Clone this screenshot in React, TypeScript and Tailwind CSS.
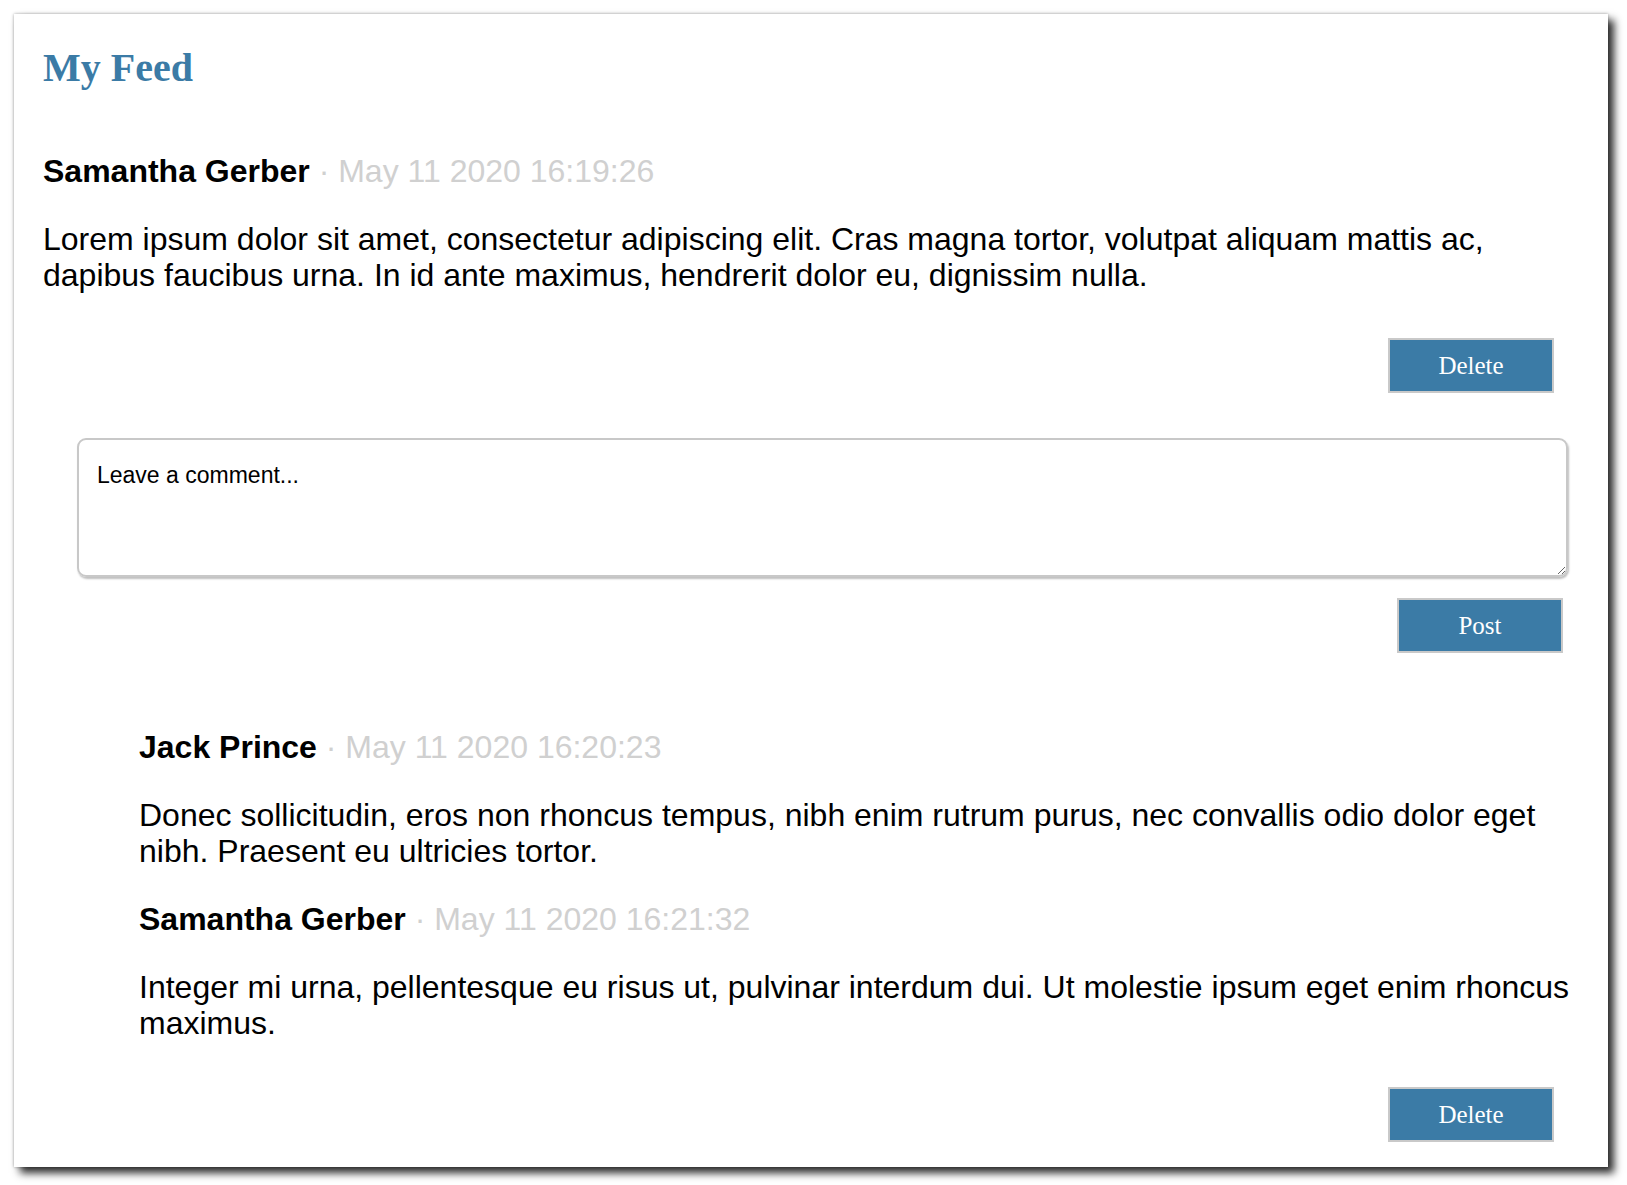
import React from "react";

type Comment = {
  id: number;
  author: string;
  date: string;
  text: string;
};

const post = {
  author: "Samantha Gerber",
  date: "May 11 2020 16:19:26",
  text: "Lorem ipsum dolor sit amet, consectetur adipiscing elit. Cras magna tortor, volutpat aliquam mattis ac, dapibus faucibus urna. In id ante maximus, hendrerit dolor eu, dignissim nulla.",
};

const comments: Comment[] = [
  {
    id: 1,
    author: "Jack Prince",
    date: "May 11 2020 16:20:23",
    text: "Donec sollicitudin, eros non rhoncus tempus, nibh enim rutrum purus, nec convallis odio dolor eget nibh. Praesent eu ultricies tortor.",
  },
  {
    id: 2,
    author: "Samantha Gerber",
    date: "May 11 2020 16:21:32",
    text: "Integer mi urna, pellentesque eu risus ut, pulvinar interdum dui. Ut molestie ipsum eget enim rhoncus maximus.",
  },
];

function Byline({ author, date }: { author: string; date: string }) {
  return (
    <div className="text-[32px] leading-[37px] text-black">
      <span className="font-bold">{author}</span>
      <span className="text-[#d0d0d0]"> · {date}</span>
    </div>
  );
}

function BlueButton({ label }: { label: string }) {
  return (
    <button className="w-[166px] h-[55px] bg-[#3b7ba6] border-2 border-[#c9c9c9] text-white text-[25px] font-['Liberation_Serif',serif]">
      {label}
    </button>
  );
}

export default function App() {
  return (
    <div className="min-h-[1185px] bg-white pt-[14px] pl-[14px] font-['Liberation_Sans',Arial,sans-serif]">
      <div className="w-[1594px] bg-white shadow-[6px_6px_8px_#2b2b2b,0_0_3px_rgba(0,0,0,0.35)] pt-[34px] pb-[25px] pl-[29px] pr-[30px]">
        <h1 className="text-[40px] leading-[40px] font-bold text-[#3b7ba6] font-['Liberation_Serif',serif]">
          My Feed
        </h1>

        {/* main post */}
        <div className="mt-[65px]">
          <Byline author={post.author} date={post.date} />
          <p className="mt-[31px] text-[32px] leading-[36px] text-black">{post.text}</p>
          <div className="flex justify-end mt-[45px] mr-[24px]">
            <BlueButton label="Delete" />
          </div>
        </div>

        {/* comment form */}
        <div className="ml-[34px] mt-[45px]">
          <textarea
            placeholder="Leave a comment..."
            className="block w-[1491px] h-[139px] rounded-[9px] border-2 border-[#c8c8c8] shadow-[1px_2px_2px_rgba(0,0,0,0.25)] pl-[18px] pt-[20px] text-[23px] leading-[30px] placeholder:text-black outline-none"
          />
          <div className="flex justify-end mt-[21px] w-[1491px] pr-[5px]">
            <BlueButton label="Post" />
          </div>
        </div>

        {/* comments */}
        <div className="ml-[96px] mt-[76px]">
          {comments.map((c, i) => (
            <div key={c.id} className={i > 0 ? "mt-[32px]" : ""}>
              <Byline author={c.author} date={c.date} />
              <p className="mt-[31px] text-[32px] leading-[36px] text-black">{c.text}</p>
            </div>
          ))}
        </div>
        <div className="flex justify-end mt-[46px] mr-[24px]">
          <BlueButton label="Delete" />
        </div>
      </div>
    </div>
  );
}
